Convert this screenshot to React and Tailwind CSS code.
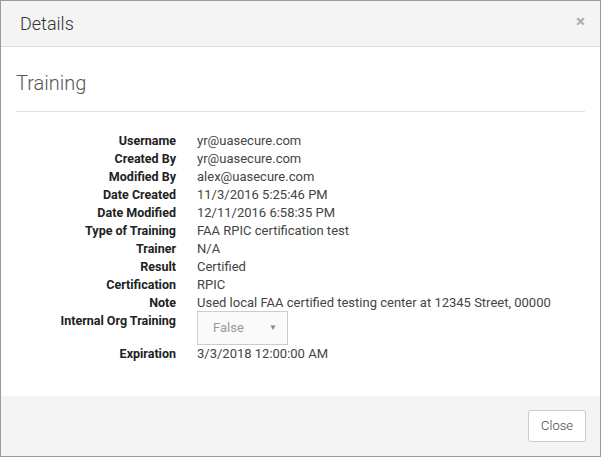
import React from 'react';

const rows = [
  ['Username', 'yr@uasecure.com'],
  ['Created By', 'yr@uasecure.com'],
  ['Modified By', 'alex@uasecure.com'],
  ['Date Created', '11/3/2016 5:25:46 PM'],
  ['Date Modified', '12/11/2016 6:58:35 PM'],
  ['Type of Training', 'FAA RPIC certification test'],
  ['Trainer', 'N/A'],
  ['Result', 'Certified'],
  ['Certification', 'RPIC'],
  ['Note', 'Used local FAA certified testing center at 12345 Street, 00000'],
];

const App = () => {
  return (
    <div
      className="w-[601px] h-[457px] flex flex-col bg-white border border-[#9a9a9a] overflow-hidden"
      style={{ fontFamily: 'Roboto, "Liberation Sans", sans-serif' }}
    >
      <div className="h-[46px] shrink-0 flex items-center justify-between pl-[19px] pr-[15px] bg-[#f4f4f4] border-b border-[#dedede]">
        <h1 className="text-[18px] font-light text-[#333]">Details</h1>
        <button className="text-[#aaa] text-[17px] font-bold leading-none -mt-[4px]">×</button>
      </div>

      <div className="flex-1 px-[15px] pt-[26px]">
        <h2 className="text-[20px] font-light text-[#555] leading-none">Training</h2>
        <hr className="mt-[18px] border-t border-[#e2e2e2]" />
        <div className="mt-[20px] text-[12.5px] leading-[18px]">
          {rows.map(([label, value]) => (
            <div key={label} className="flex">
              <div className="w-[160px] text-right font-bold text-[#222]">{label}</div>
              <div className="ml-[21px] text-[13px] text-[#444]">{value}</div>
            </div>
          ))}
          <div className="flex items-start -mt-[1px]">
            <div className="w-[160px] text-right font-bold text-[#222] mt-[1px]">Internal Org Training</div>
            <div className="ml-[21px] w-[91px] h-[34px] border border-[#ccc] bg-[#fafafa] flex items-center justify-between pl-[15px] pr-[10px] text-[#999]">
              <span className="text-[13px]">False</span>
              <span className="text-[8px] text-[#888]">▼</span>
            </div>
          </div>
          <div className="flex">
            <div className="w-[160px] text-right font-bold text-[#222]">Expiration</div>
            <div className="ml-[21px] text-[13px] text-[#444]">3/3/2018 12:00:00 AM</div>
          </div>
        </div>
      </div>

      <div className="h-[60px] shrink-0 bg-[#f4f4f4] flex items-center justify-end pr-[14px]">
        <button className="h-[32px] w-[58px] bg-white border border-[#ccc] rounded-[3px] text-[13px] text-[#444] font-light">
          Close
        </button>
      </div>
    </div>
  );
};

export default App;
